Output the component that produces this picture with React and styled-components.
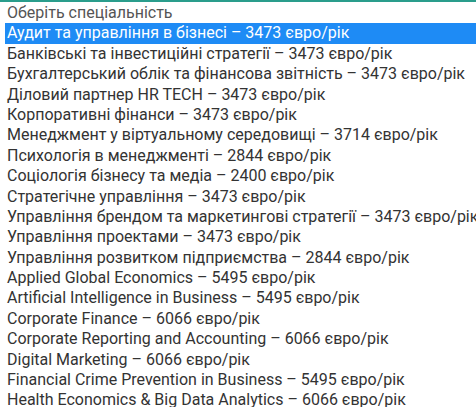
import React from 'react'
import styled, { createGlobalStyle } from 'styled-components'

const GlobalStyle = createGlobalStyle`
  html, body {
    margin: 0;
    padding: 0;
    background: #fff;
  }
`

const Container = styled.div`
  width: 476px;
  height: 407px;
  overflow: hidden;
  border-top: 2px solid #2a9d8c;
  box-sizing: border-box;
  background: #fff;
  font-family: Roboto, "Open Sans", sans-serif;
  font-size: 16px;
  color: #333;
`

const List = styled.ul`
  list-style: none;
  margin: 0;
  padding: 1px 0 0 5px;
`

const Option = styled.li`
  height: 20.4px;
  line-height: 20.4px;
  padding-left: 2px;
  white-space: nowrap;
  background: ${({ $active }) => ($active ? '#1e8bf5' : 'transparent')};
  color: ${({ $active, $muted }) => ($active ? '#fff' : $muted ? '#555' : '#333')};
`

const options = [
  'Аудит та управління в бізнесі – 3473 євро/рік',
  'Банківські та інвестиційні стратегії – 3473 євро/рік',
  'Бухгалтерський облік та фінансова звітність – 3473 євро/рік',
  'Діловий партнер HR TECH – 3473 євро/рік',
  'Корпоративні фінанси – 3473 євро/рік',
  'Менеджмент у віртуальному середовищі – 3714 євро/рік',
  'Психологія в менеджменті – 2844 євро/рік',
  'Соціологія бізнесу та медіа – 2400 євро/рік',
  'Стратегічне управління – 3473 євро/рік',
  'Управління брендом та маркетингові стратегії – 3473 євро/рік',
  'Управління проектами – 3473 євро/рік',
  'Управління розвитком підприємства – 2844 євро/рік',
  'Applied Global Economics – 5495 євро/рік',
  'Artificial Intelligence in Business – 5495 євро/рік',
  'Corporate Finance – 6066 євро/рік',
  'Corporate Reporting and Accounting – 6066 євро/рік',
  'Digital Marketing – 6066 євро/рік',
  'Financial Crime Prevention in Business – 5495 євро/рік',
  'Health Economics & Big Data Analytics – 6066 євро/рік',
]

const App = () => {
  return (
    <>
      <GlobalStyle />
      <Container>
        <List>
          <Option $muted>Оберіть спеціальність</Option>
          {options.map((o, i) => (
            <Option key={o} $active={i === 0}>{o}</Option>
          ))}
        </List>
      </Container>
    </>
  )
}

export default App
